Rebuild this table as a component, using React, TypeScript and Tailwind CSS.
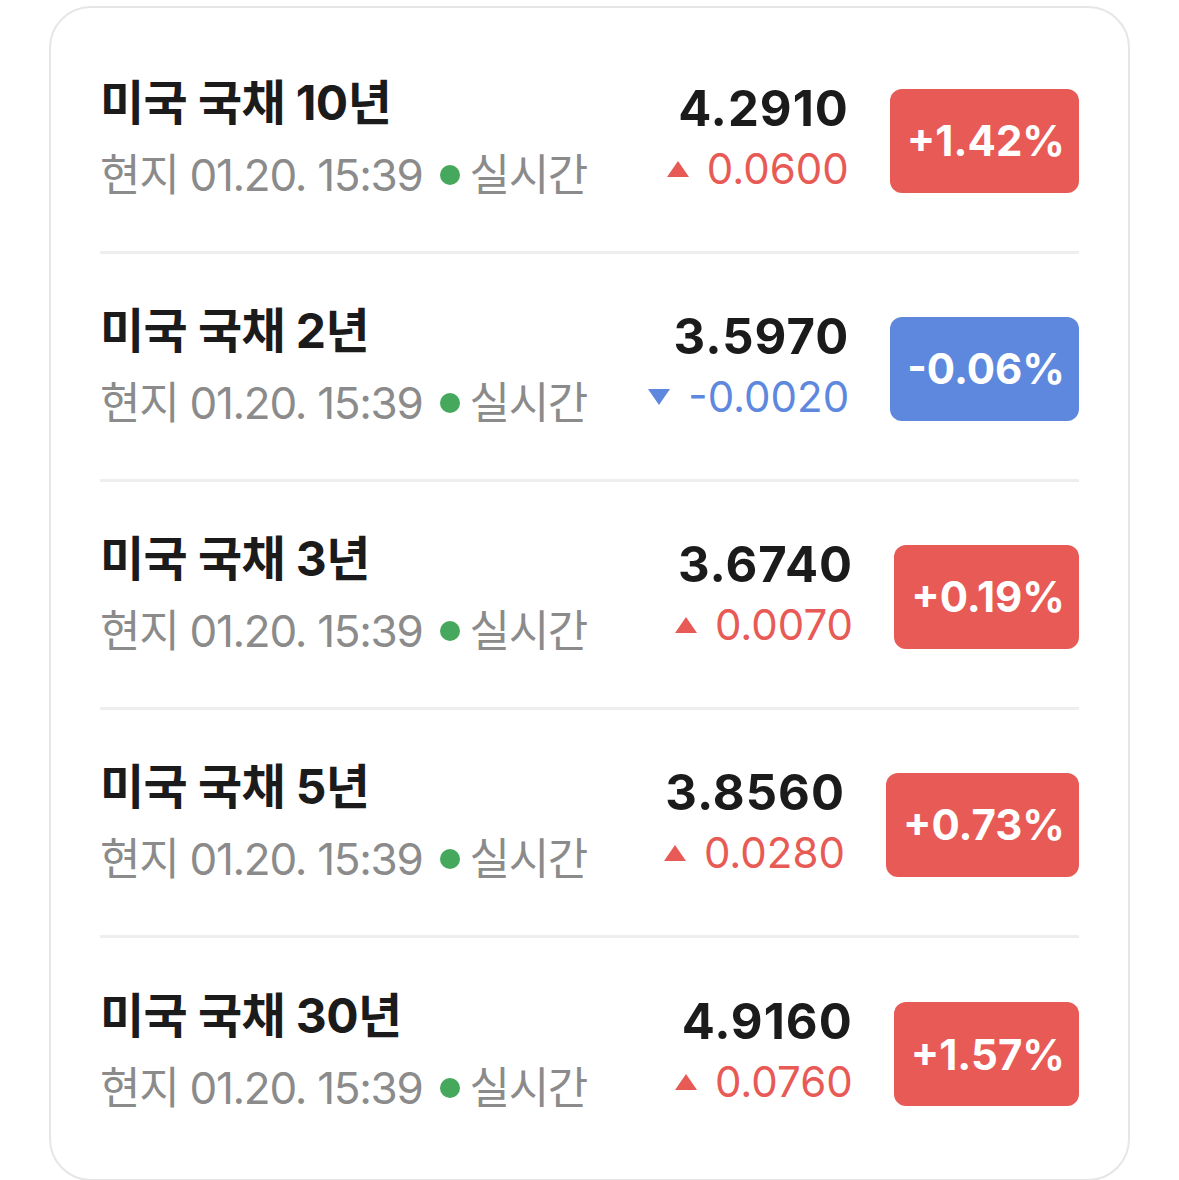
import React from "react";

type Bond = {
  name: string;
  price: string;
  change: string;
  rate: string;
  up: boolean;
};

const bonds: Bond[] = [
  { name: "미국 국채 10년", price: "4.2910", change: "0.0600", rate: "+1.42%", up: true },
  { name: "미국 국채 2년", price: "3.5970", change: "-0.0020", rate: "-0.06%", up: false },
  { name: "미국 국채 3년", price: "3.6740", change: "0.0070", rate: "+0.19%", up: true },
  { name: "미국 국채 5년", price: "3.8560", change: "0.0280", rate: "+0.73%", up: true },
  { name: "미국 국채 30년", price: "4.9160", change: "0.0760", rate: "+1.57%", up: true },
];

function Arrow({ up }: { up: boolean }) {
  return (
    <svg width="22" height="16" viewBox="0 0 22 16" className="shrink-0">
      {up ? (
        <path d="M11 0 L22 16 L0 16 Z" fill="#e85a55" />
      ) : (
        <path d="M0 0 L22 0 L11 16 Z" fill="#5d88de" />
      )}
    </svg>
  );
}

function BondRow({ bond, last }: { bond: Bond; last: boolean }) {
  return (
    <div
      className={
        "flex h-[228px] items-center " +
        (last ? "" : "border-b-[3px] border-[#eeeeee]")
      }
    >
      <div className="flex flex-1 flex-col">
        <div className="text-[48px] font-bold leading-[72px] tracking-[-0.6px] text-[#1b1b1b]">
          {bond.name}
        </div>
        <div className="flex items-center text-[44px] leading-[72px] tracking-[-1.3px] text-[#8b8b8b]">
          <span>현지 01.20. 15:39</span>
          <span className="ml-[18px] mr-[9px] h-[20px] w-[20px] rounded-full bg-[#45a85d]" />
          <span>실시간</span>
        </div>
      </div>
      <div className="flex flex-col items-end">
        <div className="text-[49px] font-bold leading-[60px] tracking-[1px] text-[#1b1b1b]">
          {bond.price}
        </div>
        <div
          className={
            "flex items-center gap-[18px] text-[42px] leading-[60px] " +
            (bond.up ? "text-[#e85a55]" : "text-[#5d88de]")
          }
        >
          <Arrow up={bond.up} />
          <span>{bond.change}</span>
        </div>
      </div>
      <div
        className={
          "ml-[41px] mt-[4px] flex h-[104px] items-center rounded-[12px] pl-[17px] pr-[14px] text-[42px] font-bold text-white " +
          (bond.up ? "bg-[#e85a55]" : "bg-[#5d88de]")
        }
      >
        {bond.rate}
      </div>
    </div>
  );
}

export default function App() {
  return (
    <div
      className="min-h-[1180px] bg-white pt-[6px]"
      style={{ fontFamily: "Inter, 'Noto Sans CJK KR', sans-serif" }}
    >
      <div className="mx-[49px] rounded-[42px] border-2 border-[#e6e6e6] bg-white px-[49px] pb-[13px] pt-[18px]">
        {bonds.map((b, i) => (
          <BondRow key={b.name} bond={b} last={i === bonds.length - 1} />
        ))}
      </div>
    </div>
  );
}
